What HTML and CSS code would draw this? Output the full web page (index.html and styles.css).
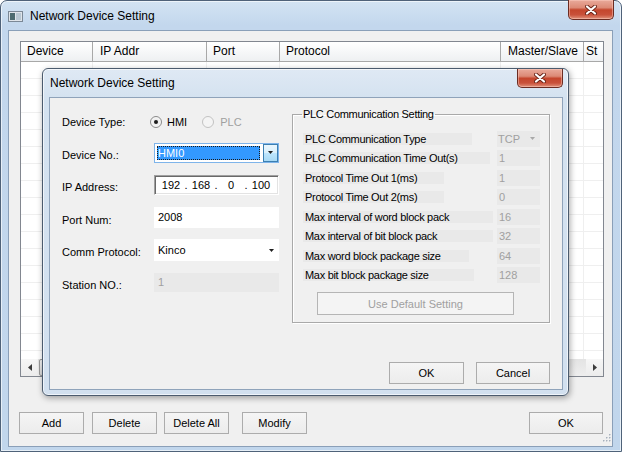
FILE: index.html
```html
<!DOCTYPE html>
<html>
<head>
<meta charset="utf-8">
<title>Network Device Setting</title>
<link rel="stylesheet" href="styles.css">
</head>
<body>
<div class="window">
  <div class="titlebar">
    <svg class="app-icon" width="15" height="11" viewBox="0 0 15 11">
      <rect x="0.5" y="0.5" width="14" height="10" fill="#dfe4ea" stroke="#7b8896"/>
      <rect x="2" y="2" width="5" height="7" fill="#4d6b70"/>
      <rect x="8" y="2" width="5" height="7" fill="#b9c8d3"/>
    </svg>
    <span class="title">Network Device Setting</span>
    <div class="close close-main">
      <svg width="12" height="10" viewBox="0 0 12 10"><path d="M2 1.5 L10 8.5 M10 1.5 L2 8.5" stroke="#6a2417" stroke-width="4" stroke-linecap="round"/><path d="M2 1.5 L10 8.5 M10 1.5 L2 8.5" stroke="#fff" stroke-width="2.2" stroke-linecap="round"/></svg>
    </div>
  </div>

  <div class="client">
    <div class="listview">
      <div class="lv-header">
        <div class="hc c1">Device</div>
        <div class="hc c2">IP Addr</div>
        <div class="hc c3">Port</div>
        <div class="hc c4">Protocol</div>
        <div class="hc c5">Master/Slave</div>
        <div class="hc c6">St</div>
      </div>
      <div class="lv-body">
        <div class="gc c1"></div>
        <div class="gc c2"></div>
        <div class="gc c3"></div>
        <div class="gc c4"></div>
        <div class="gc c5"></div>
        <div class="gc c6"></div>
      </div>
      <div class="hscroll">
        <div class="sb-btn"><svg width="4" height="7" viewBox="0 0 4 7"><polygon points="4,0 0,3.5 4,7" fill="#3c3c3c"/></svg></div>
        <div class="sb-track"><div class="sb-thumb"></div></div>
        <div class="sb-btn"><svg width="4" height="7" viewBox="0 0 4 7"><polygon points="0,0 4,3.5 0,7" fill="#3c3c3c"/></svg></div>
      </div>
    </div>

    <div class="actions">
      <button class="btn b-add">Add</button>
      <button class="btn b-del">Delete</button>
      <button class="btn b-delall">Delete All</button>
      <button class="btn b-mod">Modify</button>
      <button class="btn b-ok">OK</button>
    </div>

    <svg class="grip" width="10" height="10" viewBox="0 0 10 10">
      <g fill="#fff"><rect x="9" y="1" width="1" height="1"/><rect x="9" y="4" width="1" height="1"/><rect x="6" y="4" width="1" height="1"/><rect x="9" y="7" width="1" height="1"/><rect x="6" y="7" width="1" height="1"/><rect x="3" y="7" width="1" height="1"/></g>
      <g fill="#a7b1bd"><rect x="8" y="0" width="1.5" height="1.5"/><rect x="8" y="3" width="1.5" height="1.5"/><rect x="5" y="3" width="1.5" height="1.5"/><rect x="8" y="6" width="1.5" height="1.5"/><rect x="5" y="6" width="1.5" height="1.5"/><rect x="2" y="6" width="1.5" height="1.5"/></g>
    </svg>
  </div>

  <div class="dialog">
    <div class="dtitlebar">
      <span class="title">Network Device Setting</span>
      <div class="close close-dlg">
        <svg width="12" height="10" viewBox="0 0 12 10"><path d="M2 1.5 L10 8.5 M10 1.5 L2 8.5" stroke="#6a2417" stroke-width="4" stroke-linecap="round"/><path d="M2 1.5 L10 8.5 M10 1.5 L2 8.5" stroke="#fff" stroke-width="2.2" stroke-linecap="round"/></svg>
      </div>
    </div>
    <div class="dclient">
      <div class="dtop">
        <div class="form">
          <div class="flabel">Device Type:</div>
          <div class="radios">
            <span class="radio checked"></span><span class="rlabel">HMI</span>
            <span class="radio disabled"></span><span class="rlabel disabled">PLC</span>
          </div>

          <div class="flabel">Device No.:</div>
          <div class="fctl combo focus">
            <span class="sel">HMI0</span>
            <span class="dd"><svg width="5" height="3" viewBox="0 0 5 3"><polygon points="0,0 5,0 2.5,3" fill="#1e1e1e"/></svg></span>
          </div>

          <div class="flabel">IP Address:</div>
          <div class="fctl ipbox">
            <span class="oct">192</span><span class="dot">.</span><span class="oct">168</span><span class="dot">.</span><span class="oct">0</span><span class="dot">.</span><span class="oct">100</span>
          </div>

          <div class="flabel">Port Num:</div>
          <div class="fctl edit">2008</div>

          <div class="flabel">Comm Protocol:</div>
          <div class="fctl edit dropdown"><span>Kinco</span><svg width="5" height="3" viewBox="0 0 5 3"><polygon points="0,0 5,0 2.5,3" fill="#1e1e1e"/></svg></div>

          <div class="flabel">Station NO.:</div>
          <div class="fctl edit disabled-edit">1</div>
        </div>

        <fieldset class="group">
          <legend>PLC Communication Setting</legend>
          <div class="prows">
            <div class="prow"><div class="pcell"><span class="plabel">PLC Communication Type</span></div><div class="pval pcombo"><span>TCP</span><svg width="5" height="3" viewBox="0 0 5 3"><polygon points="0,0 5,0 2.5,3" fill="#a8a8a8"/></svg></div></div>
            <div class="prow"><div class="pcell"><span class="plabel">PLC Communication Time Out(s)</span></div><div class="pval">1</div></div>
            <div class="prow"><div class="pcell"><span class="plabel">Protocol Time Out 1(ms)</span></div><div class="pval">1</div></div>
            <div class="prow"><div class="pcell"><span class="plabel">Protocol Time Out 2(ms)</span></div><div class="pval">0</div></div>
            <div class="prow"><div class="pcell"><span class="plabel">Max interval of word block pack</span></div><div class="pval">16</div></div>
            <div class="prow"><div class="pcell"><span class="plabel">Max interval of bit block pack</span></div><div class="pval">32</div></div>
            <div class="prow"><div class="pcell"><span class="plabel">Max word block package size</span></div><div class="pval">64</div></div>
            <div class="prow"><div class="pcell"><span class="plabel">Max bit block package size</span></div><div class="pval">128</div></div>
          </div>
          <button class="btn default-btn" disabled>Use Default Setting</button>
        </fieldset>
      </div>

      <div class="dbuttons">
        <button class="btn b-dok">OK</button>
        <button class="btn b-dcancel">Cancel</button>
      </div>
    </div>
  </div>
</div>
</body>
</html>
```

FILE: styles.css
```css
* { box-sizing: border-box; }
html, body { margin: 0; padding: 0; }
body {
  width: 622px;
  height: 452px;
  overflow: hidden;
  background: #fff;
  font-family: "Liberation Sans", Arial, sans-serif;
  font-size: 11px;
  color: #000;
}

/* ---------- outer window ---------- */
.window {
  position: relative;
  width: 622px;
  height: 452px;
  border: 1px solid #4f6279;
  border-radius: 7px 7px 0 0;
  background: linear-gradient(180deg, #d3e3f3 0px, #c3d7ed 24px, #c1d6ec 100%);
  box-shadow: inset 0 0 0 1px rgba(255, 255, 255, 0.6);
  display: flex;
  flex-direction: column;
}

.titlebar {
  flex: none;
  height: 29px;
  display: flex;
  align-items: center;
  padding-left: 7px;
}
.app-icon { flex: none; margin-right: 7px; margin-top: 1px; }
.title { font-size: 12px; color: #000; white-space: nowrap; }

.close {
  flex: none;
  margin-left: auto;
  align-self: flex-start;
  width: 46px;
  display: flex;
  align-items: center;
  justify-content: center;
  border: 1px solid #6b2c22;
  border-top: none;
  border-radius: 0 0 5px 5px;
  background: linear-gradient(180deg, #e9aa9b 0%, #dc8a76 40%, #c4462d 52%, #c9513a 78%, #e1937c 100%);
  box-shadow: inset 0 0 0 1px rgba(255, 210, 200, 0.45);
}
.close-main { height: 20px; margin-top: -1px; margin-right: 7px; }
.close-dlg { height: 19px; margin-top: 0; margin-right: 5px; }

.client {
  position: relative;
  flex: 1;
  margin: 0 8px 4px 7px;
  border: 1px solid #8a9fb8;
  background: #f0f0f0;
  display: flex;
  flex-direction: column;
  padding: 10px 8px 12px 11px;
}

/* ---------- list view ---------- */
.listview {
  flex: none;
  height: 336px;
  border: 1px solid #828790;
  background: #fff;
  display: flex;
  flex-direction: column;
  overflow: hidden;
}
.lv-header {
  flex: none;
  height: 20px;
  display: flex;
  background: linear-gradient(180deg, #ffffff, #eef0f2);
  border-bottom: 1px solid #a8a8a8;
  font-size: 12px;
}
.hc {
  flex: none;
  border-right: 1px solid #a8a8a8;
  padding-left: 6px;
  line-height: 19px;
  white-space: nowrap;
  overflow: hidden;
}
.c1 { width: 72px; }
.c2 { width: 114px; }
.c3 { width: 73px; }
.c4 { width: 221px; }
.c5 { width: 83px; }
.c6 { width: 60px; }
.hc.c2, .hc.c5 { padding-left: 7px; }
.hc.c6 { padding-left: 2px; border-right: none; }

.lv-body { flex: 1; display: flex; }
.gc {
  flex: none;
  border-right: 1px solid #efefef;
  background: repeating-linear-gradient(180deg, transparent 0 16px, #efefef 16px 17px);
}

.hscroll {
  flex: none;
  height: 17px;
  display: flex;
  background: linear-gradient(180deg, #e3e3e3, #eeeeee);
}
.sb-btn {
  flex: none;
  width: 17px;
  display: flex;
  align-items: center;
  justify-content: center;
  background: linear-gradient(180deg, #f6f6f6, #ececec);
}
.sb-track { flex: 1; display: flex; padding-left: 1px; }
.sb-thumb {
  width: 520px;
  border: 1px solid #9a9a9a;
  border-radius: 2px;
  background: linear-gradient(180deg, #f4f4f4, #dadada);
}

/* ---------- buttons ---------- */
.btn {
  flex: none;
  height: 22px;
  padding: 0;
  border: 1px solid #acacac;
  border-radius: 0;
  background: linear-gradient(180deg, #f5f5f5, #ececec);
  font-family: "Liberation Sans", Arial, sans-serif;
  font-size: 11px;
  color: #000;
}

.actions {
  flex: none;
  margin-top: auto;
  margin-left: -1px;
  display: flex;
  height: 22px;
}
.b-add, .b-del, .b-delall, .b-mod { width: 65px; }
.b-del { margin-left: 8px; }
.b-delall { margin-left: 7px; }
.b-mod { margin-left: 13px; }
.b-ok { width: 74px; margin-left: auto; margin-right: 1px; }

.grip { position: absolute; right: 1px; bottom: 2px; }

/* ---------- dialog ---------- */
.dialog {
  position: absolute;
  left: 41px;
  top: 67px;
  width: 527px;
  height: 328px;
  border: 1px solid #4b5b6e;
  border-radius: 6px;
  background: linear-gradient(180deg, #dfe9f4 0px, #d4e2f0 30px, #d2e0ef 100%);
  box-shadow: 1px 2px 6px rgba(0, 0, 0, 0.35), inset 0 0 0 1px rgba(255, 255, 255, 0.65);
  display: flex;
  flex-direction: column;
}
.dtitlebar {
  flex: none;
  height: 28px;
  display: flex;
  align-items: center;
  padding-left: 7px;
}
.dclient {
  flex: 1;
  margin: 0 5px 5px 6px;
  border: 1px solid #8fa3ba;
  background: #f0f0f0;
  display: flex;
  flex-direction: column;
}
.dtop { display: flex; padding-left: 12px; }

/* left form */
.form {
  flex: none;
  width: 217px;
  margin-top: 8px;
  display: grid;
  grid-template-columns: 92px 125px;
  grid-template-rows: repeat(6, 32.5px);
  align-items: center;
}
.flabel { white-space: nowrap; }
.fctl { margin-bottom: 4px; }

.radios { display: flex; align-items: center; margin-left: -4px; }
.radio {
  flex: none;
  width: 12px;
  height: 12px;
  border-radius: 50%;
  border: 1px solid #8a8a8a;
  background: radial-gradient(circle at 50% 50%, #e4e4e4 0, #f7f7f7 70%);
  margin-right: 5px;
  display: flex;
  align-items: center;
  justify-content: center;
}
.radio.checked::after {
  content: "";
  width: 4px;
  height: 4px;
  border-radius: 50%;
  background: #1c1c1c;
}
.radio.disabled { border-color: #c2c2c2; background: #f4f4f4; margin-left: 15px; margin-right: 6px; }
.rlabel.disabled { color: #a0a0a0; }

.combo {
  height: 20px;
  display: flex;
  border: 1px solid #7eb4ea;
  background: #fff;
}
.combo .sel {
  flex: 1;
  margin: 2px 3px 2px 2px;
  background: #3399ff;
  color: #fff;
  line-height: 14px;
  padding-left: 1px;
  outline: 1px dotted #1b1b1b;
  outline-offset: -1px;
}
.combo .dd {
  flex: none;
  width: 15px;
  border: 1px solid #3c7fb1;
  background: linear-gradient(180deg, #eaf6fd 0, #d9f0fc 50%, #bee6fd 51%, #a7d9f5 100%);
  display: flex;
  align-items: center;
  justify-content: center;
}

.ipbox {
  height: 20px;
  display: flex;
  align-items: center;
  padding-left: 4px;
  background: #fff;
  border: 1px solid;
  border-color: #a0a0a0 #ffffff #ffffff #a0a0a0;
  box-shadow: inset 1px 1px 0 #696969, inset -1px -1px 0 #e3e3e3;
}
.oct { width: 24px; text-align: center; }
.dot { width: 6px; text-align: center; }

.edit {
  height: 21px;
  line-height: 21px;
  background: #fff;
  padding-left: 4px;
}
.dropdown {
  height: 22px;
  line-height: 22px;
  display: flex;
  align-items: center;
  justify-content: space-between;
  padding-right: 5px;
}
.disabled-edit {
  height: 19px;
  line-height: 19px;
  background: #e9e9e9;
  color: #a0a0a0;
}

/* right group */
.group {
  flex: none;
  width: 258px;
  margin: 10px 0 0 13px;
  padding: 8px 0 7px 9px;
  border: 1px solid #a9a9a9;
  box-shadow: inset 1px 1px 0 #fff, 1px 1px 0 #fff;
  min-inline-size: 0;
}
.group legend {
  padding: 0 1px;
  font-size: 11px;
  line-height: 13px;
  letter-spacing: -0.3px;
}
.prows { margin-left: 1px; }
.prow {
  display: flex;
  align-items: center;
  height: 19.5px;
}
.pcell { flex: none; width: 194px; }
.plabel {
  display: inline-block;
  height: 12px;
  line-height: 12px;
  background: #e9e9e9;
  padding-left: 2px;
  letter-spacing: -0.3px;
  white-space: nowrap;
}
.prow:nth-child(1) .plabel { width: 169px; }
.prow:nth-child(2) .plabel { width: 187px; }
.prow:nth-child(3) .plabel { width: 141px; }
.prow:nth-child(4) .plabel { width: 141px; }
.prow:nth-child(5) .plabel { width: 190px; }
.prow:nth-child(6) .plabel { width: 190px; }
.prow:nth-child(7) .plabel { width: 166px; }
.prow:nth-child(8) .plabel { width: 171px; }

.pval {
  flex: none;
  width: 43px;
  height: 16px;
  line-height: 16px;
  background: #e9e9e9;
  color: #a0a0a0;
  padding-left: 2px;
}
.pcombo {
  display: flex;
  align-items: center;
  justify-content: space-between;
  padding-right: 5px;
  padding-left: 1px;
}

.default-btn {
  display: block;
  width: 197px;
  height: 23px;
  margin: 7px 0 0 15px;
  color: #a0a0a0;
  background: #f4f4f4;
  border-color: #b5b5b5;
}

.dbuttons {
  flex: none;
  margin-top: auto;
  display: flex;
  justify-content: flex-end;
  gap: 12px;
  padding: 0 12px 5px 0;
}
.b-dok { width: 75px; }
.b-dcancel { width: 74px; }
```
